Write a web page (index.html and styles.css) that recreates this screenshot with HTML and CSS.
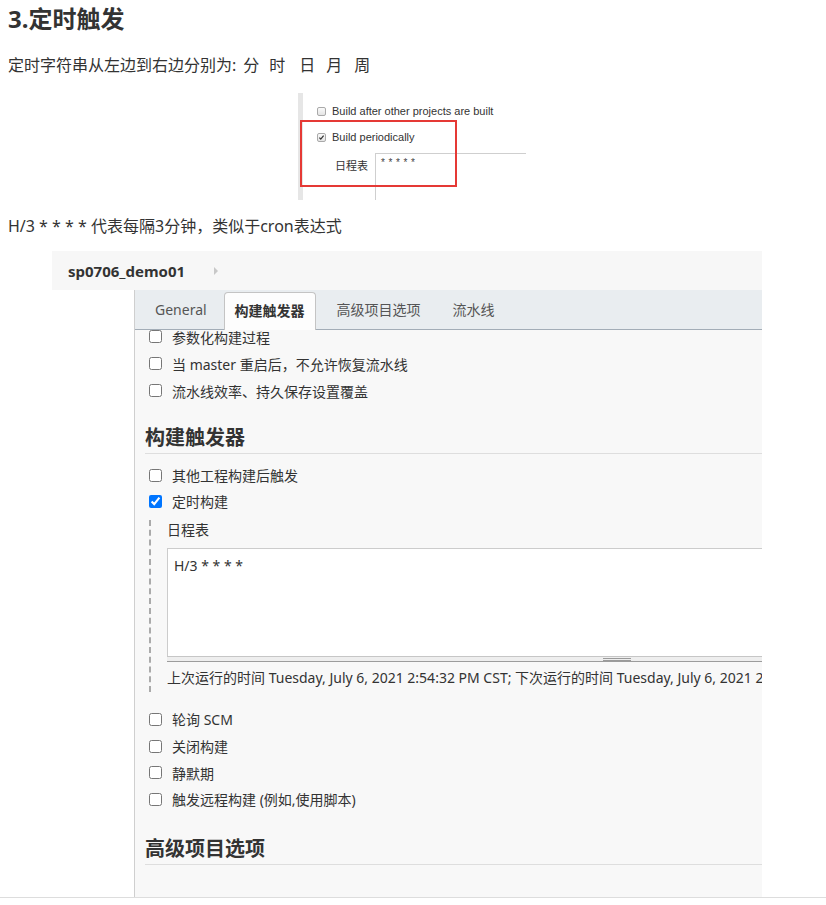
FILE: index.html
```html
<!DOCTYPE html>
<html lang="zh-CN">
<head>
<meta charset="utf-8">
<title>3.定时触发</title>
<link rel="stylesheet" href="styles.css">
</head>
<body>
<div class="article">
  <h3 class="title">3.定时触发</h3>
  <p class="para">定时字符串从左边到右边分别为:<span class="unit u1">分</span><span class="unit u2">时</span><span class="unit u3">日</span><span class="unit u4">月</span><span class="unit u5">周</span></p>

  <div class="fig1">
    <div class="fig1-bar"></div>
    <div class="fig1-body">
      <div class="f1-row">
        <span class="f1-cb"></span>
        <span class="f1-text">Build after other projects are built</span>
      </div>
      <div class="f1-row f1-row2">
        <span class="f1-cb">
          <svg width="9" height="9" viewBox="0 0 9 9"><path d="M1.8 4.6 L3.6 6.5 L7.2 2.2" fill="none" stroke="#333" stroke-width="1.6"/></svg>
        </span>
        <span class="f1-text">Build periodically</span>
      </div>
      <div class="f1-sched">
        <span class="f1-label">日程表</span>
        <div class="f1-input">* * * * *</div>
      </div>
    </div>
    <div class="f1-red"></div>
  </div>

  <p class="para para2">H/3 * * * * 代表每隔3分钟，类似于cron表达式</p>

  <div class="jk">
    <div class="jk-crumb">
      <span class="jk-job">sp0706_demo01</span>
      <span class="jk-arrow"></span>
    </div>
    <div class="jk-main">
      <div class="jk-side"></div>
      <div class="jk-panel">
        <div class="jk-tabs">
          <span class="jk-tab first">General</span>
          <span class="jk-tab active">构建触发器</span>
          <span class="jk-tab">高级项目选项</span>
          <span class="jk-tab">流水线</span>
        </div>
        <div class="jk-content">
          <div class="cb-group first">
            <label class="cb-row"><input type="checkbox"><span>参数化构建过程</span></label>
            <label class="cb-row"><input type="checkbox"><span>当 master 重启后，不允许恢复流水线</span></label>
            <label class="cb-row"><input type="checkbox"><span>流水线效率、持久保存设置覆盖</span></label>
          </div>

          <h4 class="jk-h">构建触发器</h4>

          <div class="cb-group after-h">
            <label class="cb-row r26"><input type="checkbox"><span>其他工程构建后触发</span></label>
            <label class="cb-row r26"><input type="checkbox" checked><span>定时构建</span></label>
          </div>

          <div class="nested">
            <div class="n-label">日程表</div>
            <div class="ta">
              <div class="ta-body">H/3 * * * *</div>
              <div class="ta-grip"><span class="grip"></span></div>
            </div>
            <div class="n-info">上次运行的时间 Tuesday, July 6, 2021 2:54:32 PM CST; 下次运行的时间 Tuesday, July 6, 2021 2:54:32 PM CST.</div>
          </div>

          <div class="cb-group after-n">
            <label class="cb-row r2"><input type="checkbox"><span>轮询 SCM</span></label>
            <label class="cb-row r2"><input type="checkbox"><span>关闭构建</span></label>
            <label class="cb-row r2"><input type="checkbox"><span>静默期</span></label>
            <label class="cb-row r2"><input type="checkbox"><span>触发远程构建 (例如,使用脚本)</span></label>
          </div>

          <h4 class="jk-h jk-h2">高级项目选项</h4>
        </div>
      </div>
    </div>
  </div>
  <div class="rule"></div>
</div>
</body>
</html>
```

FILE: styles.css
```css
* { box-sizing: border-box; }

html, body {
  margin: 0;
  padding: 0;
  background: #fff;
}

body {
  font-family: "Noto Sans", "Noto Sans CJK SC", sans-serif;
  color: #333;
  overflow: hidden;
}

.article {
  padding: 0 8px;
}

.title {
  margin: 2px 0 0;
  font-size: 24px;
  line-height: 34px;
  font-weight: 700;
  color: #333;
}

.para {
  margin: 17px 0 0;
  font-size: 16px;
  line-height: 24px;
  color: #333;
}

.unit { display: inline-block; }
.u1 { margin-left: 7px; }
.u2 { margin-left: 10px; }
.u3 { margin-left: 14px; }
.u4 { margin-left: 11px; }
.u5 { margin-left: 12px; }

/* ---------- figure 1: small jenkins crop ---------- */
.fig1 {
  position: relative;
  width: 230px;
  height: 107px;
  margin: 16px 0 0 288px;
  display: flex;
  overflow: hidden;
  background: #fff;
  font-family: "Liberation Sans", Arial, sans-serif;
}

.fig1-bar {
  width: 5px;
  margin-left: 2px;
  background: #e6e6e6;
}

.fig1-body {
  flex: 1;
  padding-top: 10px;
}

.f1-row {
  display: flex;
  align-items: center;
  height: 16px;
  padding-left: 14px;
}

.f1-row2 { margin-top: 10px; }

.f1-cb {
  width: 9px;
  height: 9px;
  border: 1px solid #a9a9a9;
  border-radius: 2px;
  background: linear-gradient(#fafafa, #e4e4e4);
  display: flex;
  align-items: center;
  justify-content: center;
  margin-right: 6px;
}

.f1-cb svg { display: block; }

.f1-text {
  font-size: 11px;
  color: #333;
}

.f1-sched {
  display: flex;
  margin-top: 8px;
  height: 60px;
}

.f1-label {
  width: 72px;
  padding-left: 32px;
  font-family: "Noto Sans CJK SC", sans-serif;
  font-size: 11px;
  line-height: 24px;
  color: #333;
}

.f1-input {
  flex: 1;
  border-top: 1px solid #cfcfcf;
  border-left: 1px solid #cfcfcf;
  padding-left: 5px;
  font-size: 10px;
  line-height: 18px;
  letter-spacing: 0.4px;
  color: #444;
}

.f1-red {
  position: absolute;
  left: 4px;
  top: 27px;
  width: 157px;
  height: 67px;
  border: 2px solid #e53935;
}

.para2 {
  margin-top: 14px;
}

/* ---------- jenkins screenshot ---------- */
.jk {
  width: 710px;
  margin: 13px 0 0 44px;
  font-size: 14px;
  color: #333;
}

.jk-crumb {
  height: 39px;
  background: #f7f7f7;
  display: flex;
  align-items: center;
  padding-left: 16px;
}

.jk-job {
  font-weight: 700;
  font-size: 15px;
  color: #333;
}

.jk-arrow {
  margin-left: 29px;
  width: 0;
  height: 0;
  border-top: 4px solid transparent;
  border-bottom: 4px solid transparent;
  border-left: 4px solid #c8c8c8;
}

.jk-main {
  display: flex;
}

.jk-side {
  width: 82px;
  background: #fff;
}

.jk-panel {
  flex: 1;
  height: 607px;
  border-left: 1px solid #cfcfcf;
  background: #f8f8f8;
  overflow: hidden;
}

.jk-tabs {
  height: 40px;
  background: #e9edf0;
  border-bottom: 1px solid #a3adb7;
  display: flex;
  align-items: flex-end;
  gap: 10px;
  padding-left: 9px;
}

.jk-tab {
  height: 37px;
  padding: 0 11px;
  line-height: 36px;
  font-size: 14px;
  color: #555;
  white-space: nowrap;
}

.jk-tab.first { padding-right: 7px; }

.jk-tab.active {
  height: 38px;
  margin-bottom: -1px;
  background: #fdfdfd;
  border: 1px solid #c4c4c4;
  border-bottom: none;
  border-radius: 4px 4px 0 0;
  font-weight: 700;
  color: #333;
  padding: 0 10px;
}

.jk-content {
  padding-left: 14px;
}

.cb-group.first { margin-top: -7px; }
.cb-group.after-h { margin-top: 8px; }
.cb-group.after-n { margin-top: 14px; }

.cb-row {
  display: flex;
  align-items: center;
  height: 27px;
  white-space: nowrap;
}

.cb-row.r26 { height: 26px; }
.cb-row.r2 { height: 26.7px; }

.cb-row input {
  width: 13px;
  height: 13px;
  margin: 0 10px 0 0;
  flex: none;
}

.jk-h {
  margin: 20px 0 0 -4px;
  font-size: 20px;
  line-height: 28px;
  font-weight: 700;
  color: #333;
  padding-bottom: 1px;
  border-bottom: 1px solid #dedede;
}

.jk-h2 { margin-top: 22px; }

.nested {
  margin-top: 6px;
  border-left: 2px dashed #aaa;
  padding: 0 0 4px 16px;
}

.n-label {
  line-height: 20px;
  font-size: 14px;
}

.ta {
  width: 900px;
  margin-top: 8px;
}

.ta-body {
  height: 108px;
  background: #fff;
  border: 1px solid #cccccc;
  border-bottom: none;
  padding: 7px 6px;
  line-height: 20px;
  font-size: 14px;
  color: #333;
}

.ta-grip {
  height: 6px;
  background: #eeeeee;
  border-top: 1px solid #c6c6c6;
  border-bottom: 1px solid #9c9c9c;
  display: flex;
  justify-content: center;
  align-items: center;
}

.grip {
  width: 28px;
  height: 3px;
  border-top: 1px solid #9a9a9a;
  border-bottom: 1px solid #9a9a9a;
}

.n-info {
  margin-top: 6px;
  line-height: 20px;
  white-space: nowrap;
}

.rule {
  height: 1px;
  background: #dddddd;
  margin: 0 -8px;
}
```
